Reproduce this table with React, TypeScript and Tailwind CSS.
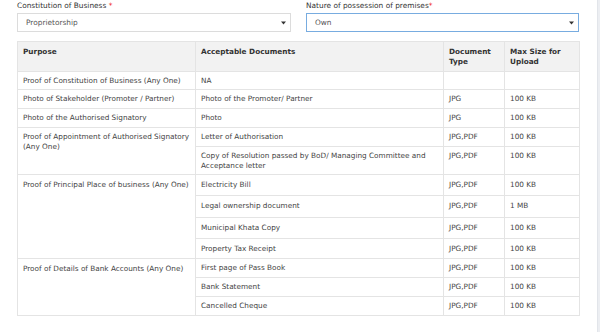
import React from "react";

const font = { fontFamily: '"DejaVu Sans", Verdana, sans-serif' };

type Row = {
  purpose?: { text: string; span: number };
  doc: string;
  type: string;
  size: string;
  h: string;
  pt: string;
};

const rows: Row[] = [
  { purpose: { text: "Proof of Constitution of Business (Any One)", span: 1 }, doc: "NA", type: "", size: "", h: "h-[18px]", pt: "pt-[4px]" },
  { purpose: { text: "Photo of Stakeholder (Promoter / Partner)", span: 1 }, doc: "Photo of the Promoter/ Partner", type: "JPG", size: "100 KB", h: "h-[19px]", pt: "pt-[4px]" },
  { purpose: { text: "Photo of the Authorised Signatory", span: 1 }, doc: "Photo", type: "JPG", size: "100 KB", h: "h-[19px]", pt: "pt-[4px]" },
  { purpose: { text: "Proof of Appointment of Authorised Signatory (Any One)", span: 2 }, doc: "Letter of Authorisation", type: "JPG,PDF", size: "100 KB", h: "h-[19px]", pt: "pt-[4px]" },
  { doc: "Copy of Resolution passed by BoD/ Managing Committee and Acceptance letter", type: "JPG,PDF", size: "100 KB", h: "h-[28px]", pt: "pt-[4px]" },
  { purpose: { text: "Proof of Principal Place of business (Any One)", span: 4 }, doc: "Electricity Bill", type: "JPG,PDF", size: "100 KB", h: "h-[21px]", pt: "pt-[5px]" },
  { doc: "Legal ownership document", type: "JPG,PDF", size: "1 MB", h: "h-[22px]", pt: "pt-[5px]" },
  { doc: "Municipal Khata Copy", type: "JPG,PDF", size: "100 KB", h: "h-[21px]", pt: "pt-[5px]" },
  { doc: "Property Tax Receipt", type: "JPG,PDF", size: "100 KB", h: "h-[20px]", pt: "pt-[5px]" },
  { purpose: { text: "Proof of Details of Bank Accounts (Any One)", span: 3 }, doc: "First page of Pass Book", type: "JPG,PDF", size: "100 KB", h: "h-[19px]", pt: "pt-[4px]" },
  { doc: "Bank Statement", type: "JPG,PDF", size: "100 KB", h: "h-[19px]", pt: "pt-[4px]" },
  { doc: "Cancelled Cheque", type: "JPG,PDF", size: "100 KB", h: "h-[19px]", pt: "pt-[4px]" },
];

function Arrow() {
  return (
    <svg width="5" height="4" viewBox="0 0 5 4" className="shrink-0">
      <path d="M0 0.5 L5 0.5 L2.5 3.5 Z" fill="#333" />
    </svg>
  );
}

function Field({ label, gap, value, focused, w }: { label: string; gap: boolean; value: string; focused?: boolean; w: string }) {
  return (
    <div className={`flex flex-col ${w}`}>
      <div className="h-[10px] leading-[10px] text-[7.4px] text-[#333] mb-[2px] whitespace-nowrap">
        {label}
        {gap ? " " : ""}
        <span className="text-[#e00]">*</span>
      </div>
      <div
        className={`h-[19px] flex items-center justify-between pl-[8px] pr-[4px] border bg-white ${
          focused ? "border-[#78ace0]" : "border-[#dcdcdc]"
        }`}
      >
        <span className="text-[7.4px] leading-[10px] text-[#555]">{value}</span>
        <Arrow />
      </div>
    </div>
  );
}

export default function App() {
  return (
    <div className="w-[600px] h-[332px] bg-white flex overflow-hidden" style={font}>
      <div className="w-[597px] pl-[17px] pt-[1px] flex flex-col">
        <div className="flex gap-[15px]">
          <Field label="Constitution of Business" gap value="Proprietorship" w="w-[274px]" />
          <Field label="Nature of possession of premises" gap={false} value="Own" focused w="w-[273px]" />
        </div>
        <table className="mt-[9px] w-[562px] table-fixed border-collapse text-[7.3px] leading-[10px] text-[#444]">
          <colgroup>
            <col className="w-[178px]" />
            <col className="w-[248px]" />
            <col className="w-[61px]" />
            <col className="w-[75px]" />
          </colgroup>
          <thead>
            <tr className="h-[29px] bg-[#f2f2f2]">
              {["Purpose", "Acceptable Documents", "Document Type", "Max Size for Upload"].map((t) => (
                <th key={t} className="border border-[#e4e4e4] px-[5px] pt-[5px] pb-[4px] text-left align-top font-bold text-[#333]">
                  {t}
                </th>
              ))}
            </tr>
          </thead>
          <tbody>
            {rows.map((r, i) => (
              <tr key={i} className={r.h}>
                {r.purpose && (
                  <td rowSpan={r.purpose.span} className="border border-[#e4e4e4] pl-[5px] pr-[0px] pt-[4px] align-top">
                    <div className={r.purpose.span > 2 ? "pt-[1px]" : ""}>{r.purpose.text}</div>
                  </td>
                )}
                <td className={`border border-[#e4e4e4] px-[5px] ${r.pt} align-top`}>{r.doc}</td>
                <td className={`border border-[#e4e4e4] px-[5px] ${r.pt} align-top`}>{r.type}</td>
                <td className={`border border-[#e4e4e4] px-[5px] ${r.pt} align-top`}>{r.size}</td>
              </tr>
            ))}
          </tbody>
        </table>
      </div>
      <div className="w-[3px] h-full bg-[#eceef2] border-l border-[#e2e5ea]" />
    </div>
  );
}
